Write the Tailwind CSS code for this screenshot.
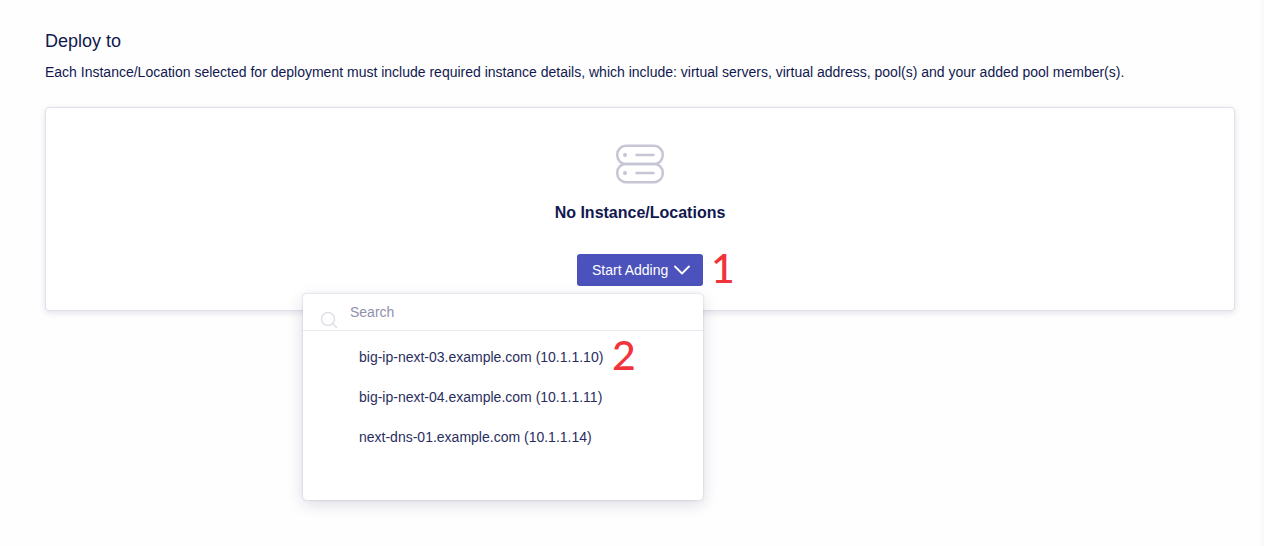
<!DOCTYPE html>
<html lang="en">
<head>
<meta charset="utf-8">
<meta name="viewport" content="width=device-width, initial-scale=1">
<title>Deploy to</title>
<script src="https://cdn.jsdelivr.net/npm/@tailwindcss/browser@4"></script>
</head>
<body class="min-h-screen overflow-x-hidden bg-[#fefefe] font-['Liberation_Sans',Arial,sans-serif] text-sm text-[#11184f] shadow-[inset_-6px_0_6px_-6px_rgba(20,30,60,0.06)]">
<main class="pt-7 pr-[29px] pl-[45px]">
  <h1 class="text-lg leading-[26px]">Deploy to</h1>
  <p class="mt-2 leading-5">Each Instance/Location selected for deployment must include required instance details, which include: virtual servers, virtual address, pool(s) and your added pool member(s).</p>
  <section class="mt-[25px] flex flex-col items-center rounded border border-[#e0e0ea] bg-white pt-9 pb-6 shadow-[0_2px_6px_rgba(30,30,90,0.12)]">
    <svg class="h-10 w-12" viewBox="0 0 48 40" fill="none" stroke="#c5c5d6" stroke-width="2.5" stroke-linecap="round" aria-hidden="true">
      <rect x="1.3" y="1.8" width="45.4" height="18.2" rx="8.5"/>
      <rect x="1.3" y="20" width="45.4" height="18.2" rx="8.5"/>
      <path d="M20.5 11h17M20.5 29h17"/>
      <circle cx="9" cy="11" r="2.1" fill="#c5c5d6" stroke="none"/>
      <circle cx="9" cy="29" r="2.1" fill="#c5c5d6" stroke="none"/>
    </svg>
    <h2 class="mt-[17px] text-base leading-6 font-bold">No Instance/Locations</h2>
    <div class="relative mt-[29px]">
      <button type="button" aria-expanded="true" aria-controls="instances" class="flex h-8 w-[126px] items-center gap-1.5 rounded-[3px] bg-[#4b52bb] pl-[15px] text-white">
        <span>Start Adding</span>
        <svg class="h-4 w-4" viewBox="0 0 16 16" fill="none" stroke="currentColor" stroke-width="1.8" stroke-linecap="round" stroke-linejoin="round" aria-hidden="true"><path d="M1 4.5l7 7 7-7"/></svg>
      </button>
      <span class="absolute top-[-11px] left-full ml-2 font-[Lato,sans-serif] text-[41px] leading-[50px] font-medium text-[#f3333b]">1</span>
      <div id="instances" class="absolute top-full right-0 z-10 mt-2 w-[400px] rounded bg-white pb-[43px] shadow-[0_0_2px_rgba(30,30,90,0.24),0_4px_16px_rgba(30,30,90,0.16)]">
        <div class="flex h-[37px] border-b border-[#e8e8ee] pl-[17px]">
          <svg class="mt-[17px] h-[18px] w-[18px] shrink-0" viewBox="0 0 18 18" fill="none" stroke="#e0e0e8" stroke-width="1.5" stroke-linecap="round" aria-hidden="true"><circle cx="8" cy="8" r="6.5"/><path d="M12.6 12.6l3.9 3.9"/></svg>
          <input type="search" aria-label="Search" placeholder="Search" class="ml-3 h-9 min-w-0 flex-1 bg-transparent outline-none placeholder:text-[#9090aa]">
        </div>
        <ul class="pt-[6px]">
          <li><button type="button" class="relative flex h-10 w-full items-center pl-14 text-left text-[#292e60]">big-ip-next-03.example.com (10.1.1.10)<span class="absolute top-[-7px] left-[309px] font-[Lato,sans-serif] text-[41px] leading-[50px] font-medium text-[#f3333b]">2</span></button></li>
          <li><button type="button" class="flex h-10 w-full items-center pl-14 text-left text-[#292e60]">big-ip-next-04.example.com (10.1.1.11)</button></li>
          <li><button type="button" class="flex h-10 w-full items-center pl-14 text-left text-[#292e60]">next-dns-01.example.com (10.1.1.14)</button></li>
        </ul>
      </div>
    </div>
  </section>
</main>
</body>
</html>
